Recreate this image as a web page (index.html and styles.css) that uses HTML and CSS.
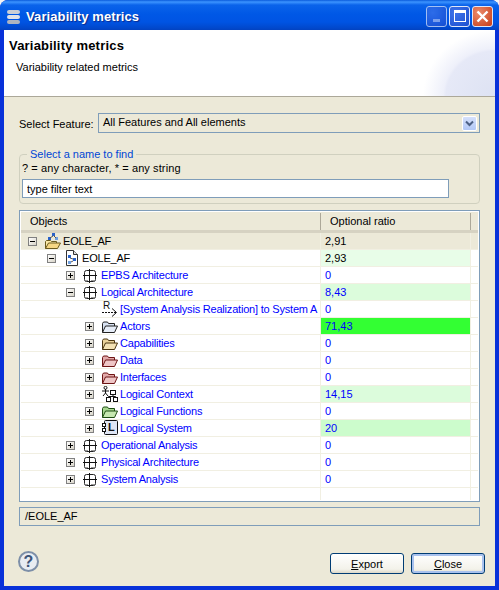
FILE: index.html
```html
<!DOCTYPE html>
<html lang="en">
<head>
  <meta charset="UTF-8">
  <title>Variability metrics</title>
  <link rel="stylesheet" href="styles.css">
</head>
<body>

  <svg class="defs" width="0" height="0">
    <symbol id="i-grid" viewBox="0 0 16 16">
      <rect x="1.500" y="3.500" width="11" height="11" rx="2" fill="none" stroke="#222"/>
      <path d="M6.500 2v14M0 8.500h14" stroke="#111" fill="none"/>
      <path d="M3 13.500h2M8 13.500h3" stroke="#999" fill="none"/>
    </symbol>
    <symbol id="i-folder" viewBox="0 0 16 16">
      <path d="M0.500 14.500v-9l1-1.500h4l1 1.500h6v2.500" fill="var(--back)" stroke="var(--line)"/>
      <path d="M0.500 14.500l3-6.500h12l-3 6.500z" fill="var(--front)" stroke="var(--line)"/>
    </symbol>
    <symbol id="i-root" viewBox="0 0 16 16">
      <path d="M0.500 15.500v-7l1-1h4l1 1h5v2" fill="#fbe9a6" stroke="#6b5a1e"/>
      <path d="M0.500 15.500l3-5.500h12l-3 5.500z" fill="#f6d784" stroke="#6b5a1e"/>
      <rect x="7" y="0" width="3" height="3" fill="#2a62c8"/>
      <rect x="3" y="4" width="3" height="3" fill="#2a62c8"/>
      <rect x="10" y="4" width="3" height="3" fill="#6fa0e0"/>
      <path d="M8 3L5 5M9 3l2 2" stroke="#555"/>
    </symbol>
    <symbol id="i-file" viewBox="0 0 16 16">
      <path d="M2.500 0.500h7l4 4v11h-11z" fill="#fff" stroke="#333"/>
      <path d="M9.500 0.500v4h4" fill="#ddd" stroke="#333"/>
      <rect x="4" y="5" width="3" height="3" fill="#2a62c8"/>
      <rect x="9" y="8" width="3" height="3" fill="#2a62c8"/>
      <rect x="4" y="11" width="3" height="3" fill="#6fa0e0"/>
      <path d="M6 8l3 1M7 12l2-1" stroke="#555"/>
    </symbol>
    <symbol id="i-arrow" viewBox="0 0 16 16">
      <path d="M0 11.500h14" stroke="#111" stroke-dasharray="2 1" fill="none"/>
      <path d="M10 7.500l4.500 4-4.500 4" stroke="#111" fill="none"/>
    </symbol>
    <symbol id="i-context" viewBox="0 0 16 16">
      <circle cx="3.500" cy="1.800" r="1.500" fill="#fff" stroke="#111"/>
      <path d="M0 5h7M3.500 3v4M3.500 7L1 10M3.500 7L6 10" stroke="#111" fill="none"/>
      <rect x="8.500" y="4.500" width="5" height="4" fill="#fff" stroke="#111"/>
      <rect x="4.500" y="11.500" width="4" height="4" fill="#fff" stroke="#111"/>
      <rect x="11.500" y="11.500" width="4" height="4" fill="#fff" stroke="#111"/>
      <path d="M11 9v1.500M6.500 11v-.500h7v1" stroke="#111" fill="none"/>
    </symbol>
    <symbol id="i-system" viewBox="0 0 16 16">
      <rect x="2.500" y="0.500" width="13" height="14" rx="1" fill="#dfe6f4" stroke="#111"/>
      <rect x="0.500" y="3.500" width="3" height="3" fill="#fff" stroke="#111"/>
      <rect x="0.500" y="8.500" width="3" height="3" fill="#fff" stroke="#111"/>
    </symbol>
  </svg>

  <div class="window">
    <div class="titlebar">
      <svg class="app-icon" width="16" height="16" viewBox="0 0 16 16">
        <rect x="1" y="1" width="13" height="4" rx="2" fill="#c9ced6"/>
        <rect x="1" y="6" width="13" height="4" rx="2" fill="#dfe2e8"/>
        <rect x="1" y="11" width="13" height="4" rx="2" fill="#aeb5c0"/>
      </svg>
      <span class="title">Variability metrics</span>
      <div class="win-buttons">
        <div class="win-btn min"><i></i></div>
        <div class="win-btn max"><i></i></div>
        <div class="win-btn close">
          <svg width="13" height="13" viewBox="0 0 13 13"><path d="M1.500 1.500l10 10M11.500 1.500l-10 10" stroke="#fff" stroke-width="2.400"/></svg>
        </div>
      </div>
    </div>

    <div class="client">
      <div class="banner">
        <h1>Variability metrics</h1>
        <p>Variability related metrics</p>
      </div>

      <div class="content">
        <div class="feature-row">
          <label>Select Feature:</label>
          <div class="combo">
            <span>All Features and All elements</span>
            <div class="combo-arrow">
              <svg width="9" height="7" viewBox="0 0 9 7"><path d="M1 1.500l3.500 3.500 3.500-3.500" fill="none" stroke="#4d6185" stroke-width="2"/></svg>
            </div>
          </div>
        </div>

        <fieldset class="finder">
          <legend>Select a name to find</legend>
          <div class="hint">? = any character, * = any string</div>
          <input class="filter" type="text" value="type filter text">
        </fieldset>

        <div class="tree">
          <div class="tree-head">
            <div class="col-name">Objects</div>
            <div class="col-ratio">Optional ratio</div>
          </div>

          <div class="row root">
            <div class="name l0"><b class="toggle minus"></b><svg class="icon"><use href="#i-root"/></svg><span>EOLE_AF</span></div>
            <div class="ratio">2,91</div>
          </div>
          <div class="row">
            <div class="name l1"><b class="toggle minus"></b><svg class="icon"><use href="#i-file"/></svg><span>EOLE_AF</span></div>
            <div class="ratio heat-1">2,93</div>
          </div>
          <div class="row link">
            <div class="name l2"><b class="toggle plus"></b><svg class="icon"><use href="#i-grid"/></svg><span>EPBS Architecture</span></div>
            <div class="ratio">0</div>
          </div>
          <div class="row link">
            <div class="name l2"><b class="toggle minus"></b><svg class="icon"><use href="#i-grid"/></svg><span>Logical Architecture</span></div>
            <div class="ratio heat-2">8,43</div>
          </div>
          <div class="row link">
            <div class="name l3"><i class="no-toggle"></i><span class="icon-r"><em>R</em><svg class="icon"><use href="#i-arrow"/></svg></span><span>[System Analysis Realization] to System A</span></div>
            <div class="ratio">0</div>
          </div>
          <div class="row link">
            <div class="name l3"><b class="toggle plus"></b><svg class="icon f-blue"><use href="#i-folder"/></svg><span>Actors</span></div>
            <div class="ratio heat-4">71,43</div>
          </div>
          <div class="row link">
            <div class="name l3"><b class="toggle plus"></b><svg class="icon f-tan"><use href="#i-folder"/></svg><span>Capabilities</span></div>
            <div class="ratio">0</div>
          </div>
          <div class="row link">
            <div class="name l3"><b class="toggle plus"></b><svg class="icon f-red"><use href="#i-folder"/></svg><span>Data</span></div>
            <div class="ratio">0</div>
          </div>
          <div class="row link">
            <div class="name l3"><b class="toggle plus"></b><svg class="icon f-red"><use href="#i-folder"/></svg><span>Interfaces</span></div>
            <div class="ratio">0</div>
          </div>
          <div class="row link">
            <div class="name l3"><b class="toggle plus"></b><svg class="icon"><use href="#i-context"/></svg><span>Logical Context</span></div>
            <div class="ratio heat-2">14,15</div>
          </div>
          <div class="row link">
            <div class="name l3"><b class="toggle plus"></b><svg class="icon f-green"><use href="#i-folder"/></svg><span>Logical Functions</span></div>
            <div class="ratio">0</div>
          </div>
          <div class="row link">
            <div class="name l3"><b class="toggle plus"></b><span class="icon-l"><svg class="icon"><use href="#i-system"/></svg><em>L</em></span><span>Logical System</span></div>
            <div class="ratio heat-3">20</div>
          </div>
          <div class="row link">
            <div class="name l2"><b class="toggle plus"></b><svg class="icon"><use href="#i-grid"/></svg><span>Operational Analysis</span></div>
            <div class="ratio">0</div>
          </div>
          <div class="row link">
            <div class="name l2"><b class="toggle plus"></b><svg class="icon"><use href="#i-grid"/></svg><span>Physical Architecture</span></div>
            <div class="ratio">0</div>
          </div>
          <div class="row link">
            <div class="name l2"><b class="toggle plus"></b><svg class="icon"><use href="#i-grid"/></svg><span>System Analysis</span></div>
            <div class="ratio">0</div>
          </div>
          <div class="tree-rest"><div class="col-name"></div><div class="col-ratio"></div></div>
        </div>

        <div class="path">/EOLE_AF</div>
      </div>

      <div class="footer">
        <div class="help">?</div>
        <div class="actions">
          <button class="btn"><u>E</u>xport</button>
          <button class="btn default"><u>C</u>lose</button>
        </div>
      </div>
    </div>
  </div>

</body>
</html>
```

FILE: styles.css
```css
* {
  box-sizing: border-box;
}

body {
  margin: 0;
  background-color: #f4f4f4;
  font-family: "Liberation Sans", Arial, sans-serif;
  font-size: 11px;
  color: #000;
}

.defs {
  display: block;
  height: 0;
}

.window {
  width: 499px;
  height: 590px;
  display: flex;
  flex-direction: column;
  border-radius: 8px 8px 0 0;
  background-color: #0831d9;
  overflow: hidden;
}

/* title bar */
.titlebar {
  height: 30px;
  flex: none;
  display: flex;
  align-items: center;
  padding: 3px 6px 0 6px;
  background: linear-gradient(#0a5bdc 0, #3c94ff 2px, #0a63ea 5px, #0058e6 14px, #0054e3 22px, #0148cc 28px, #0242c0 30px);
}

.app-icon {
  flex: none;
}

.title {
  margin-left: 4px;
  font-size: 13px;
  font-weight: bold;
  letter-spacing: 0.1px;
  color: #fff;
  text-shadow: 1px 1px 1px #0a2a8c;
}

.win-buttons {
  margin-left: auto;
  display: flex;
  gap: 2px;
  margin-top: -1px;
}

.win-btn {
  width: 21px;
  height: 21px;
  border: 1px solid #dfe6f8;
  border-radius: 3px;
  display: flex;
  align-items: center;
  justify-content: center;
  background: radial-gradient(circle at 30% 30%, #3f74ea, #1c4fd0);
}

.win-btn.min {
  opacity: 0.72;
  align-items: flex-end;
  padding-bottom: 4px;
}

.win-btn.min i {
  width: 7px;
  height: 3px;
  background-color: #a9bdf0;
}

.win-btn.max i {
  width: 12px;
  height: 12px;
  border: 1px solid #fff;
  border-top-width: 3px;
}

.win-btn.close {
  background: radial-gradient(circle at 30% 30%, #ea8a6c, #c83c16);
}

/* client area */
.client {
  flex: 1;
  margin: 0 4px 4px 4px;
  display: flex;
  flex-direction: column;
  background-color: #ece9d8;
}

.banner {
  height: 67px;
  flex: none;
  padding: 8px 5px 0 5px;
  background: radial-gradient(ellipse 72px 66px at 100% 100%, #dde2f3 0, #e6e9f7 68%, #eef0fa 72%, #fff 100%), #fff;
  border-bottom: 1px solid #aca899;
}

.banner h1 {
  margin: 0;
  font-size: 13px;
  font-weight: bold;
  letter-spacing: 0.2px;
  line-height: 16px;
}

.banner p {
  margin: 6px 0 0 7px;
  line-height: 15px;
}

.content {
  padding: 16px 15px 0 15px;
}

.feature-row {
  display: flex;
  align-items: center;
  justify-content: space-between;
}

.feature-row label {
  white-space: nowrap;
  padding-top: 1px;
}

.combo {
  width: 382px;
  height: 20px;
  display: flex;
  justify-content: space-between;
  padding: 0 2px 0 4px;
  border: 1px solid #7f9db9;
  line-height: 16px;
}

.combo-arrow {
  width: 15px;
  height: 15px;
  margin-top: 2px;
  display: flex;
  align-items: center;
  justify-content: center;
  border: 1px solid #fff;
  border-radius: 2px;
  background: linear-gradient(#d5e0fb, #b2c8f6);
}

.finder {
  margin: 15px 0 0 0;
  padding: 0 0 0 2px;
  height: 56px;
  border: 1px solid #d0d0bf;
  border-radius: 4px;
}

.finder legend {
  margin-left: 5px;
  padding: 0 3px 0 3px;
  color: #0046d5;
  line-height: 13px;
}

.hint {
  line-height: 14px;
  letter-spacing: 0.1px;
}

.filter {
  display: block;
  width: 427px;
  height: 19px;
  margin-top: 4px;
  padding: 0 4px 0 4px;
  border: 1px solid #7f9db9;
  background-color: #fff;
  font-family: inherit;
  font-size: 11px;
  color: #000;
}

/* tree table */
.tree {
  height: 292px;
  margin-top: 6px;
  padding: 1px;
  border: 1px solid #7f9db9;
  background-color: #fff;
  display: flex;
  flex-direction: column;
}

.tree-head {
  height: 21px;
  flex: none;
  display: flex;
  padding-top: 1px;
  line-height: 17px;
  background-color: #ece9d8;
  border-bottom: 3px solid #d6d2c2;
}

.tree-head .col-name {
  width: 299px;
  padding-left: 9px;
}

.tree-head .col-ratio {
  width: 151px;
  padding-left: 9px;
  border-left: 1px solid #aca899;
  border-right: 1px solid #aca899;
}

.row {
  height: 17px;
  flex: none;
  display: flex;
  line-height: 16px;
  border-bottom: 1px solid #f1efe2;
  white-space: nowrap;
}

.row.root {
  background-color: #ece9d8;
}

.row.link {
  color: #0000ff;
}

.name {
  width: 300px;
  flex: none;
  display: flex;
  align-items: center;
  overflow: hidden;
  border-right: 1px solid #f1efe2;
}

.name span {
  flex: none;
  letter-spacing: -0.2px;
}

.l0 { padding-left: 7px; }
.l1 { padding-left: 26px; }
.l2 { padding-left: 45px; }
.l3 { padding-left: 64px; }

.toggle {
  width: 9px;
  height: 9px;
  flex: none;
  position: relative;
  margin-right: 8px;
  border: 1px solid #808080;
  background: linear-gradient(135deg, #fff, #d8d4c8);
}

.toggle::before {
  content: "";
  position: absolute;
  left: 1px;
  top: 3px;
  width: 5px;
  height: 1px;
  background-color: #000;
}

.toggle.plus::after {
  content: "";
  position: absolute;
  left: 3px;
  top: 1px;
  width: 1px;
  height: 5px;
  background-color: #000;
}

.no-toggle {
  width: 17px;
  flex: none;
}

.icon {
  width: 16px;
  height: 16px;
  flex: none;
  margin-right: 2px;
  display: block;
}

.icon-r,
.icon-l {
  position: relative;
  height: 16px;
}

.icon-r em,
.icon-l em {
  position: absolute;
  font-style: normal;
  color: #111;
}

.icon-r em {
  left: 1px;
  top: 0;
  font-size: 10px;
  line-height: 9px;
}

.icon-l em {
  left: 6px;
  top: -1px;
  font-weight: bold;
}

.f-blue { --line: #222; --back: #d8e2f2; --front: #e6edf8; }
.f-tan { --line: #4a3510; --back: #e9d29a; --front: #f3e2b4; }
.f-red { --line: #6d1414; --back: #e2aaaa; --front: #eec6c6; }
.f-green { --line: #1f4d12; --back: #a8d890; --front: #c6e8b0; }

.ratio {
  width: 150px;
  flex: none;
  padding-left: 4px;
}

.row .ratio {
  border-right: 1px solid #f1efe2;
}

.heat-1 { background-color: #e8fde8; }
.heat-2 { background-color: #dcfcdc; }
.heat-3 { background-color: #ccfccc; }
.heat-4 { background-color: #33ff33; }

.tree-rest {
  flex: 1;
  display: flex;
}

.tree-rest .col-name {
  width: 300px;
  border-right: 1px solid #f1efe2;
}

.tree-rest .col-ratio {
  width: 150px;
  border-right: 1px solid #f1efe2;
}

.path {
  height: 19px;
  margin-top: 5px;
  padding-left: 5px;
  line-height: 17px;
  border: 1px solid #7f9db9;
}

/* footer */
.footer {
  flex: 1;
  display: flex;
  justify-content: space-between;
  align-items: flex-end;
  padding: 0 10px 12px 14px;
}

.help {
  width: 21px;
  height: 21px;
  margin-bottom: 2px;
  border: 2px solid #7d8fa8;
  border-radius: 50%;
  background-color: #e8ecf2;
  color: #3c5478;
  font-size: 16px;
  font-weight: bold;
  line-height: 17px;
  text-align: center;
}

.actions {
  display: flex;
  gap: 7px;
}

.btn {
  width: 74px;
  height: 21px;
  padding: 0;
  border: 1px solid #003c74;
  border-radius: 3px;
  background: linear-gradient(#fff, #f3f2ea 80%, #dcd8c8);
  font-family: inherit;
  font-size: 11px;
  color: #000;
}

.btn.default {
  box-shadow: inset 0 0 0 2px #a9c2ee;
}
```
